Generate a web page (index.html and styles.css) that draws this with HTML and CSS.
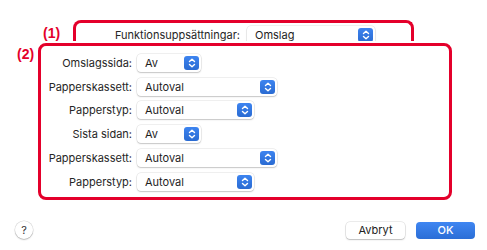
FILE: index.html
```html
<!DOCTYPE html>
<html lang="sv">
<head>
<meta charset="utf-8">
<link rel="stylesheet" href="styles.css">
</head>
<body>
<div class="sheet">
  <div class="sec1">
    <span class="tag tag1">(1)</span>
    <div class="box1">
      <span class="lbl lbl-top">Funktionsuppsättningar:</span>
      <div class="popup w-top"><span class="val">Omslag</span><span class="step"><svg viewBox="0 0 14 14" width="14" height="14"><path d="M4.5 5.5 L7 3.2 L9.5 5.5 M4.5 8.5 L7 10.8 L9.5 8.5" fill="none" stroke="#fff" stroke-width="1.4" stroke-linecap="round" stroke-linejoin="round"/></svg></span></div>
    </div>
  </div>
  <div class="sec2">
    <span class="tag tag2">(2)</span>
    <div class="box2">
      <span class="lbl">Omslagssida:</span>
      <div class="popup w-s"><span class="val">Av</span><span class="step"><svg viewBox="0 0 14 14" width="14" height="14"><path d="M4.5 5.5 L7 3.2 L9.5 5.5 M4.5 8.5 L7 10.8 L9.5 8.5" fill="none" stroke="#fff" stroke-width="1.4" stroke-linecap="round" stroke-linejoin="round"/></svg></span></div>
      <span class="lbl">Papperskassett:</span>
      <div class="popup w-l"><span class="val">Autoval</span><span class="step"><svg viewBox="0 0 14 14" width="14" height="14"><path d="M4.5 5.5 L7 3.2 L9.5 5.5 M4.5 8.5 L7 10.8 L9.5 8.5" fill="none" stroke="#fff" stroke-width="1.4" stroke-linecap="round" stroke-linejoin="round"/></svg></span></div>
      <span class="lbl">Papperstyp:</span>
      <div class="popup w-m"><span class="val">Autoval</span><span class="step"><svg viewBox="0 0 14 14" width="14" height="14"><path d="M4.5 5.5 L7 3.2 L9.5 5.5 M4.5 8.5 L7 10.8 L9.5 8.5" fill="none" stroke="#fff" stroke-width="1.4" stroke-linecap="round" stroke-linejoin="round"/></svg></span></div>
      <span class="lbl">Sista sidan:</span>
      <div class="popup w-s"><span class="val">Av</span><span class="step"><svg viewBox="0 0 14 14" width="14" height="14"><path d="M4.5 5.5 L7 3.2 L9.5 5.5 M4.5 8.5 L7 10.8 L9.5 8.5" fill="none" stroke="#fff" stroke-width="1.4" stroke-linecap="round" stroke-linejoin="round"/></svg></span></div>
      <span class="lbl">Papperskassett:</span>
      <div class="popup w-l"><span class="val">Autoval</span><span class="step"><svg viewBox="0 0 14 14" width="14" height="14"><path d="M4.5 5.5 L7 3.2 L9.5 5.5 M4.5 8.5 L7 10.8 L9.5 8.5" fill="none" stroke="#fff" stroke-width="1.4" stroke-linecap="round" stroke-linejoin="round"/></svg></span></div>
      <span class="lbl">Papperstyp:</span>
      <div class="popup w-m"><span class="val">Autoval</span><span class="step"><svg viewBox="0 0 14 14" width="14" height="14"><path d="M4.5 5.5 L7 3.2 L9.5 5.5 M4.5 8.5 L7 10.8 L9.5 8.5" fill="none" stroke="#fff" stroke-width="1.4" stroke-linecap="round" stroke-linejoin="round"/></svg></span></div>
    </div>
  </div>
  <div class="footer">
    <span class="help">?</span>
    <span class="spacer"></span>
    <span class="btn btn-cancel">Avbryt</span>
    <span class="btn btn-ok">OK</span>
  </div>
</div>
</body>
</html>
```

FILE: styles.css
```css
html, body {
  margin: 0;
  padding: 0;
  background: #ffffff;
}
body {
  width: 487px;
  height: 250px;
  overflow: hidden;
  font-family: "Inter", "Liberation Sans", sans-serif;
  font-size: 11px;
  color: #262626;
}
.sheet {
  display: flex;
  flex-direction: column;
}
.tag {
  color: #e4002b;
  font-family: "Liberation Sans", sans-serif;
  font-weight: 700;
  font-size: 14px;
  line-height: 16px;
}
.sec1 {
  display: flex;
  padding-top: 20px;
  padding-left: 43px;
  height: 21px;
}
.tag1 {
  width: 30px;
  padding-top: 5px;
}
.box1 {
  box-sizing: border-box;
  width: 341px;
  height: 21px;
  border: 3px solid #e4002b;
  border-bottom: 0;
  border-radius: 8px 8px 0 0;
  overflow: hidden;
  display: flex;
  align-items: flex-start;
  padding-top: 3px;
}
.lbl-top {
  width: 164px;
  text-align: right;
  margin-right: 7px;
  line-height: 18px;
}
.sec2 {
  display: flex;
  padding-left: 17px;
  margin-top: 2px;
}
.tag2 {
  width: 21px;
  padding-top: 3px;
}
.box2 {
  box-sizing: border-box;
  width: 414px;
  height: 157px;
  border: 3px solid #e4002b;
  border-radius: 8px;
  display: grid;
  grid-template-columns: 91px auto;
  grid-auto-rows: 23.8px;
  column-gap: 5px;
  align-items: center;
  justify-items: start;
  padding-top: 5px;
}
.lbl {
  justify-self: end;
  white-space: nowrap;
}
.popup {
  box-sizing: border-box;
  height: 18px;
  display: flex;
  align-items: center;
  justify-content: space-between;
  background: #ffffff;
  border-radius: 4px;
  box-shadow: 0 0 0 0.5px rgba(0, 0, 0, 0.12), 0 1px 1.5px rgba(0, 0, 0, 0.18);
  padding: 0 2px 0 8px;
  color: #1e1e1e;
}
.w-top { width: 128px; }
.w-s { width: 64px; }
.w-m { width: 117px; }
.w-l { width: 140px; }
.step {
  width: 15px;
  height: 14px;
  border-radius: 3px;
  background: linear-gradient(#3d84f0, #2a6bd2);
  display: flex;
  align-items: center;
  justify-content: center;
}
.step svg {
  display: block;
}
.footer {
  display: flex;
  align-items: center;
  margin-top: 21px;
  height: 18px;
  padding: 0 12px 0 15px;
}
.help {
  box-sizing: border-box;
  width: 18px;
  height: 18px;
  border-radius: 50%;
  background: #fff;
  box-shadow: 0 0 0 0.5px rgba(0, 0, 0, 0.15), 0 1px 1.5px rgba(0, 0, 0, 0.2);
  display: flex;
  align-items: center;
  justify-content: center;
  font-size: 11px;
  color: #333;
}
.spacer {
  flex: 1;
}
.btn {
  box-sizing: border-box;
  width: 59px;
  height: 17px;
  border-radius: 4px;
  display: flex;
  align-items: center;
  justify-content: center;
}
.btn-cancel {
  background: #fff;
  box-shadow: 0 0 0 0.5px rgba(0, 0, 0, 0.15), 0 1px 1.5px rgba(0, 0, 0, 0.2);
  color: #222;
  margin-right: 11px;
}
.btn-ok {
  background: linear-gradient(#3f86f2, #2b6ed6);
  color: #fff;
  font-weight: 500;
}
```
